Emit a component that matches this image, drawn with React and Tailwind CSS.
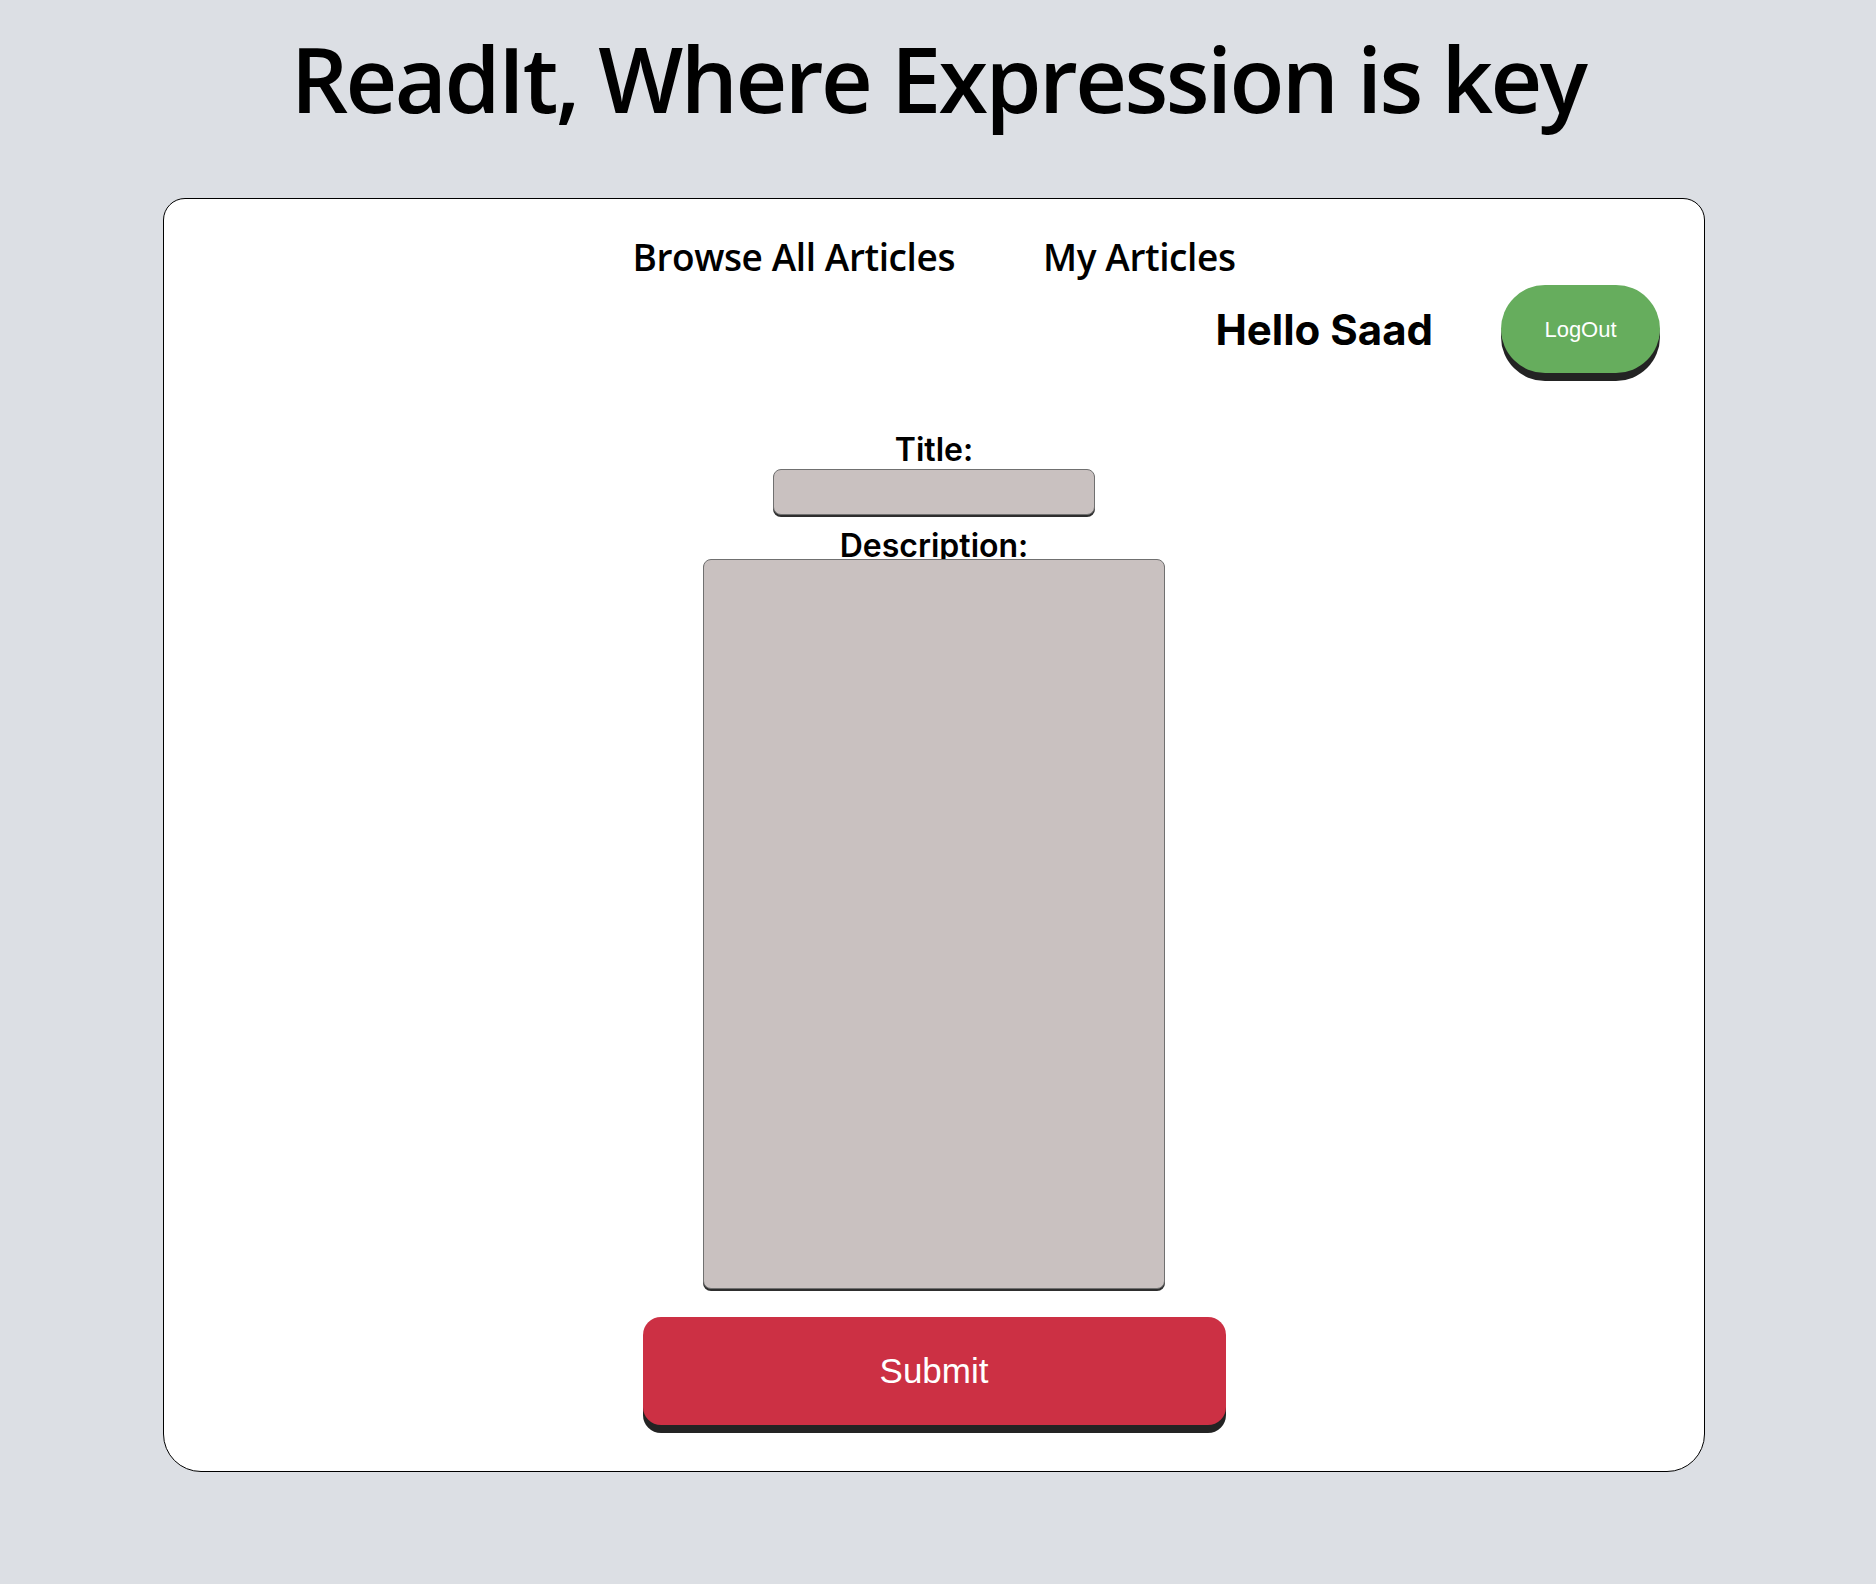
import { useState } from 'react';

export default function App() {
  const [title, setTitle] = useState('');
  const [description, setDescription] = useState('');

  return (
    <div className="min-h-[1584px] bg-[#dcdfe4] pt-[17px]">
      <h1 className="text-center font-['Open_Sans',sans-serif] text-[90px] leading-[122px] font-semibold tracking-[-2.6px] text-black">
        ReadIt, Where Expression is key
      </h1>

      <div className="mt-[59px] ml-[163px] w-[1542px] rounded-t-[22px] rounded-b-[38px] border-[1.5px] border-black bg-white pt-[33px] pb-[46px]">
        <nav className="flex justify-center gap-[88px] font-['Open_Sans',sans-serif] text-[37px] leading-[50px] font-semibold tracking-[-0.4px] text-black">
          <a href="#">Browse All Articles</a>
          <a href="#">My Articles</a>
        </nav>

        <div className="mt-[3px] flex items-center justify-end gap-[68px] pr-[44px]">
          <span className="font-['Inter',sans-serif] text-[42px] font-bold text-black">Hello Saad</span>
          <button className="h-[88px] w-[159px] rounded-full bg-[#66ad5d] font-['Liberation_Sans',Arial,sans-serif] text-[22px] text-white shadow-[0_8px_0_#232323]">
            LogOut
          </button>
        </div>

        <form className="mt-[63px] flex flex-col items-center font-['Inter',sans-serif]" onSubmit={(e) => e.preventDefault()}>
          <label className="text-[32px] leading-[28px] font-semibold text-black">Title:</label>
          <input
            value={title}
            onChange={(e) => setTitle(e.target.value)}
            className="mt-[5px] h-[46px] w-[322px] rounded-[8px] border border-[#707070] bg-[#c9c1c0] shadow-[0_2px_0_#2e2e2e] outline-none"
          />
          <label className="mt-[17px] text-[32px] leading-[28px] font-semibold text-black">Description:</label>
          <textarea
            value={description}
            onChange={(e) => setDescription(e.target.value)}
            className="-mt-[1px] h-[730px] w-[462px] resize-none rounded-[8px] border border-[#707070] bg-[#c9c1c0] shadow-[0_2px_0_#2e2e2e] outline-none"
          />
          <button
            type="submit"
            className="mt-[28px] h-[108px] w-[583px] rounded-[18px] bg-[#cc3044] font-['Liberation_Sans',Arial,sans-serif] text-[35px] text-white shadow-[0_8px_0_#232323]"
          >
            Submit
          </button>
        </form>
      </div>
    </div>
  );
}
